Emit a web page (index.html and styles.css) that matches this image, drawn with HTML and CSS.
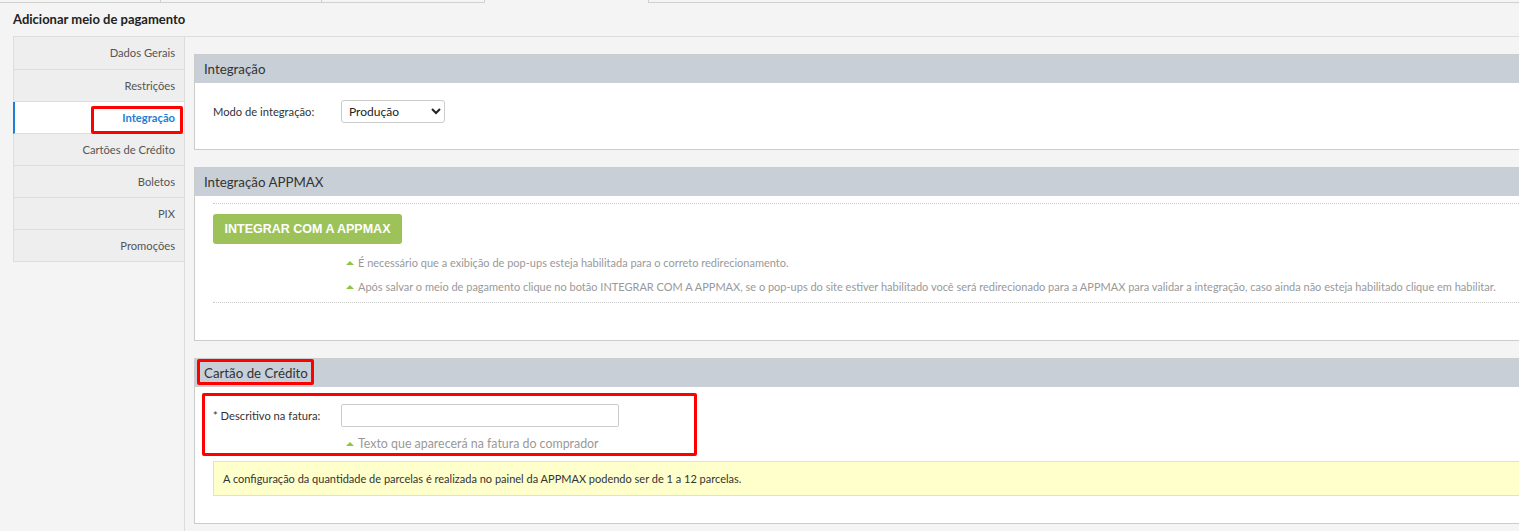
FILE: index.html
```html
<!DOCTYPE HTML>
<html lang="pt-BR">
<head>
  <meta charset="UTF-8">
  <title>Adicionar meio de pagamento</title>
  <link rel="stylesheet" href="styles.css">
</head>
<body>

  <div class="tabs">
    <div class="tab"></div>
    <div class="tab"></div>
    <div class="tab tab-shadow"></div>
    <div class="tab tab-active"></div>
    <div class="tab tab-rest"></div>
  </div>

  <h1 class="page-title">Adicionar meio de pagamento</h1>

  <div class="layout">

    <ul class="sidebar">
      <li class="side-item side-first">Dados Gerais</li>
      <li class="side-item">Restrições</li>
      <li class="side-item side-active">
        Integração
        <span class="mark mark-side"></span>
      </li>
      <li class="side-item">Cartões de Crédito</li>
      <li class="side-item">Boletos</li>
      <li class="side-item">PIX</li>
      <li class="side-item">Promoções</li>
    </ul>

    <div class="content">

      <div class="panel">
        <div class="panel-head">Integração</div>
        <div class="panel-body body-mode">
          <div class="field-row">
            <label class="field-label">Modo de integração:</label>
            <select class="field-select">
              <option>Produção</option>
              <option>Sandbox</option>
            </select>
          </div>
        </div>
      </div>

      <div class="panel">
        <div class="panel-head">Integração APPMAX</div>
        <div class="panel-body body-appmax">
          <div class="appmax-box">
            <button class="btn-appmax">INTEGRAR COM A APPMAX</button>
            <p class="hint hint-first"><span class="tri"></span>É necessário que a exibição de pop-ups esteja habilitada para o correto redirecionamento.</p>
            <p class="hint"><span class="tri"></span>Após salvar o meio de pagamento clique no botão INTEGRAR COM A APPMAX, se o pop-ups do site estiver habilitado você será redirecionado para a APPMAX para validar a integração, caso ainda não esteja habilitado clique em habilitar.</p>
          </div>
        </div>
      </div>

      <div class="panel">
        <div class="panel-head">
          <span class="head-text">Cartão de Crédito<span class="mark mark-head"></span></span>
        </div>
        <div class="panel-body body-card">
          <div class="card-group">
            <span class="mark mark-group"></span>
            <div class="field-row">
              <label class="field-label">* Descritivo na fatura:</label>
              <input class="field-input" type="text">
            </div>
            <p class="hint hint-field"><span class="tri"></span>Texto que aparecerá na fatura do comprador</p>
          </div>
          <div class="notice">A configuração da quantidade de parcelas é realizada no painel da APPMAX podendo ser de 1 a 12 parcelas.</div>
        </div>
      </div>

    </div>
  </div>

</body>
</html>
```

FILE: styles.css
```css
html, body {
  margin: 0;
  background: #f4f4f4;
  font-family: "Source Sans Pro", Lato, "Open Sans", sans-serif;
  color: #333;
  overflow: hidden;
}

/* cut-off tab strip at the very top */
.tabs {
  display: flex;
  height: 2px;
  border-bottom: 1px solid #cfcfcf;
}

.tab {
  width: 160px;
  border-right: 1px solid #cfcfcf;
  background: #f4f4f4;
}

.tab-shadow {
  width: 162px;
  box-shadow: 2px 0 2px #ddd;
}

.tab-active {
  width: 163px;
  margin-bottom: -1px;
  border-right: 1px solid #cfcfcf;
}

.tab-rest {
  flex: 1;
  border-right: none;
}

.page-title {
  margin: 0;
  padding: 8px 13px 0;
  height: 25px;
  font-size: 13px;
  font-weight: bold;
  color: #222;
}

.layout {
  display: flex;
  margin-left: 13px;
  border-top: 1px solid #ddd;
  height: 495px;
}

/* left menu */
.sidebar {
  list-style: none;
  margin: 0;
  padding: 0;
  width: 170px;
  align-self: flex-start;
  background: #eee;
  border-left: 1px solid #ddd;
}

.side-item {
  position: relative;
  height: 31px;
  line-height: 31px;
  border-bottom: 1px solid #ddd;
  text-align: right;
  padding-right: 9px;
  font-size: 11.2px;
  color: #555;
}

.side-first {
  height: 32px;
  line-height: 32px;
}

.side-active {
  background: #fff;
  color: #1b7fd6;
  font-weight: bold;
  border-left: 2px solid #1b7fd6;
  margin-left: -1px;
}

/* red annotation boxes */
.mark {
  position: absolute;
  border: 3px solid #f00;
  border-radius: 2px;
  pointer-events: none;
}

.mark-side {
  left: 76px;
  right: 1px;
  top: 4px;
  bottom: -1px;
}

.mark-head {
  left: -7px;
  right: -6px;
  top: -6px;
  bottom: -4px;
}

.mark-group {
  left: 7px;
  top: 6px;
  width: 489px;
  height: 57px;
}

/* panels */
.content {
  flex: 1;
  border-left: 1px solid #ddd;
  padding: 17px 0 0 9px;
}

.panel {
  border: 1px solid #ccc;
  border-right: none;
  margin-bottom: 17px;
  background: #fff;
}

.panel-head {
  height: 28px;
  line-height: 28px;
  padding-left: 9px;
  background: #c8cfd6;
  font-size: 13.3px;
  color: #333;
}

.head-text {
  position: relative;
}

.panel-body {
  background: #fff;
}

.field-row {
  display: flex;
  align-items: center;
  padding-left: 18px;
}

.field-label {
  width: 128px;
  font-size: 11.2px;
  color: #333;
}

.body-mode {
  padding: 17px 0 26px;
}

.field-select {
  width: 104px;
  height: 23px;
  border: 1px solid #ccc;
  border-radius: 3px;
  background: #fff;
  font-family: inherit;
  font-size: 12px;
  color: #222;
  padding: 0 3px;
}

/* appmax integration */
.body-appmax {
  padding: 7px 0 37px;
}

.appmax-box {
  margin-left: 18px;
  border-top: 1px dotted #ccc;
  border-bottom: 1px dotted #ccc;
  padding: 10px 0 3px;
}

.btn-appmax {
  display: block;
  width: 189px;
  height: 30px;
  border: none;
  border-radius: 3px;
  background: #9dc25a;
  color: #fff;
  font-family: "Liberation Sans", Arial, sans-serif;
  font-weight: bold;
  font-size: 12.5px;
  cursor: pointer;
}

.hint {
  margin: 0;
  padding-left: 133px;
  font-size: 11px;
  line-height: 24px;
  color: #999;
}

.hint-first {
  margin-top: 7px;
}

.tri {
  display: inline-block;
  width: 0;
  height: 0;
  border-left: 4px solid transparent;
  border-right: 4px solid transparent;
  border-bottom: 4px solid #8dc63f;
  margin-right: 4px;
  vertical-align: 2px;
}

/* credit card */
.body-card {
  padding: 0 0 27px;
}

.card-group {
  position: relative;
  padding-top: 17px;
}

.field-input {
  width: 272px;
  height: 19px;
  border: 1px solid #ccc;
  border-radius: 2px;
  padding: 1px 2px;
}

.hint-field {
  font-size: 12.4px;
  line-height: 20px;
  margin-top: 7px;
  margin-left: 18px;
}

.notice {
  margin: 7px 0 0 18px;
  padding: 0 9px;
  height: 33px;
  line-height: 33px;
  background: #ffffcc;
  border-top: 1px solid #e6e6a6;
  border-bottom: 1px solid #e6e6a6;
  border-left: 1px solid #e6e6a6;
  font-size: 11px;
  color: #333;
}
```
